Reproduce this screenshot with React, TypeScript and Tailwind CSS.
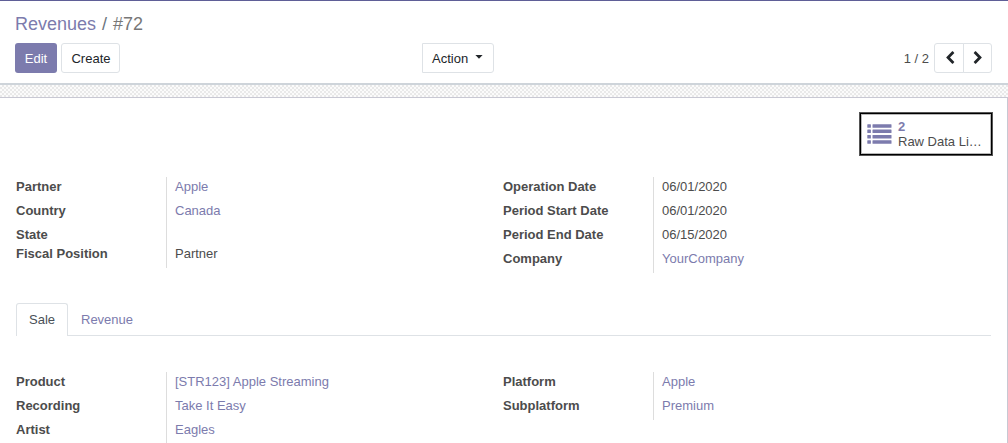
import React from "react";

type Field = { label: string; value?: string; link?: boolean; tight?: boolean };

const partnerFields: Field[] = [
  { label: "Partner", value: "Apple", link: true },
  { label: "Country", value: "Canada", link: true },
  { label: "State", tight: true },
  { label: "Fiscal Position", value: "Partner" },
];

const dateFields: Field[] = [
  { label: "Operation Date", value: "06/01/2020" },
  { label: "Period Start Date", value: "06/01/2020" },
  { label: "Period End Date", value: "06/15/2020" },
  { label: "Company", value: "YourCompany", link: true },
];

const productFields: Field[] = [
  { label: "Product", value: "[STR123] Apple Streaming", link: true },
  { label: "Recording", value: "Take It Easy", link: true },
  { label: "Artist", value: "Eagles", link: true },
];

const platformFields: Field[] = [
  { label: "Platform", value: "Apple", link: true },
  { label: "Subplatform", value: "Premium", link: true },
];

function FieldGroup({ fields }: { fields: Field[] }) {
  return (
    <dl className="w-[487px]">
      {fields.map((f) => (
        <div key={f.label} className={`flex leading-[19px] ${f.tight ? "h-[19px]" : "h-6"}`}>
          <dt className="w-[150px] font-bold">{f.label}</dt>
          <dd className={`border-l border-[#dddddd] pl-2 ${f.link ? "text-[#7c7bad]" : ""}`}>{f.value}</dd>
        </div>
      ))}
    </dl>
  );
}

function Chevron({ right = false }: { right?: boolean }) {
  return (
    <svg viewBox="0 0 1792 1792" className="size-[14px]" fill="#212529">
      {right ? (
        <path d="M1363 877l-742 742q-19 19-45 19t-45-19l-166-166q-19-19-19-45t19-45l531-531-531-531q-19-19-19-45t19-45l166-166q19-19 45-19t45 19l742 742q19 19 19 45t-19 45z" />
      ) : (
        <path d="M1427 301l-531 531 531 531q19 19 19 45t-19 45l-166 166q-19 19-45 19t-45-19l-742-742q-19-19-19-45t19-45l742-742q19-19 45-19t45 19l166 166q19 19 19 45t-19 45z" />
      )}
    </svg>
  );
}

function ListIcon() {
  return (
    <svg width="25" height="20" viewBox="0 0 25 20" fill="#7c7bad">
      {[0.3, 5.6, 10.9, 16.2].map((y) => (
        <g key={y}>
          <rect x="0.3" y={y} width="3.6" height="3.5" rx="0.5" />
          <rect x="5.5" y={y} width="19" height="3.5" rx="0.5" />
        </g>
      ))}
    </svg>
  );
}

export default function App() {
  return (
    <div className="flex h-[443px] w-[1008px] flex-col overflow-hidden bg-white font-['Liberation_Sans',Arial,sans-serif] text-[13px] text-[#4c4c4c]">
      <header className="h-[85px] shrink-0 border-t border-b-2 border-t-[#5f5e97] border-b-[#ced4da] px-[15px]">
        <nav className="flex h-[42px] items-center gap-[6px] pt-[5px] text-[18px] leading-[27px]">
          <a className="text-[#7c7bad]">Revenues</a>
          <span className="text-[#6c757d]">/</span>
          <span className="text-[#777777]">#72</span>
        </nav>
        <div className="grid h-[30px] grid-cols-[407px_1fr_auto] grid-rows-[30px] text-[#212529]">
          <div className="flex gap-1">
            <button className="w-[42px] rounded-[3px] bg-[#7c7bad] pt-px text-white">Edit</button>
            <button className="w-[59px] rounded-[3px] border border-[#dee2e6] pt-px pl-px">Create</button>
          </div>
          <button className="flex w-[72px] items-center rounded-r-[3px] border border-[#dee2e6] pt-px pl-[9px]">
            Action
            <svg width="8" height="4" viewBox="0 0 8 4" className="mb-[4px] ml-[7px]" fill="#212529">
              <path d="M0.4 0h7.2L4 3.8z" />
            </svg>
          </button>
          <div className="flex pr-[1px]">
            <span className="mr-[5px] leading-[31px] text-[#4c4c4c]">1 / 2</span>
            <button className="flex w-[30px] items-center justify-center rounded-l-[3px] border border-[#dee2e6] pl-[2px]">
              <Chevron />
            </button>
            <button className="-ml-px flex w-[29px] items-center justify-center rounded-r-[3px] border border-[#dee2e6]">
              <Chevron right />
            </button>
          </div>
        </div>
      </header>
      <div className="h-3 shrink-0 bg-[repeating-conic-gradient(#e9e9e9_0%_25%,#fbfbfb_0%_50%)] bg-size-[4px_4px]" />
      <main className="flex grow flex-col border-t border-r border-[#c8c8d3] pr-4 pl-4">
        <div className="-mr-[2px] mt-[14px] flex justify-end">
          <button className="flex h-[44px] w-[134px] items-center border border-[#555555] pl-[7px] text-left shadow-[inset_0_0_0_1px_#000000,inset_0_0_0_2px_#b8b8b8]">
            <ListIcon />
            <span className="ml-[6px] leading-[15px]">
              <span className="block font-bold text-[#7c7bad]">2</span>
              <span className="block">Raw Data Li…</span>
            </span>
          </button>
        </div>
        <section className="mt-[21px] flex">
          <FieldGroup fields={partnerFields} />
          <FieldGroup fields={dateFields} />
        </section>
        <div className="mt-[30px] flex h-[33px] shrink-0 border-b border-[#dee2e6]">
          <button className="h-[33px] w-[52px] rounded-t-[3px] border border-b-0 border-[#dee2e6] bg-white text-[#495057]">
            Sale
          </button>
          <button className="ml-[13px] pt-[2px] text-[#7c7bad]">Revenue</button>
        </div>
        <section className="mt-9 flex">
          <FieldGroup fields={productFields} />
          <FieldGroup fields={platformFields} />
        </section>
      </main>
    </div>
  );
}
